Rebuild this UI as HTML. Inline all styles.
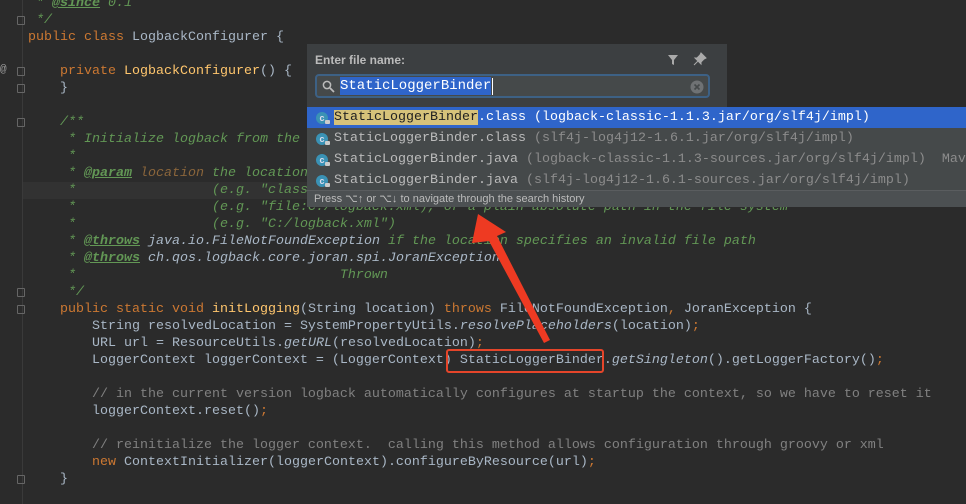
<!DOCTYPE html>
<html><head><meta charset="utf-8"><style>
body{margin:0;width:966px;height:504px;background:#2b2b2b;overflow:hidden;position:relative;font-family:"Liberation Mono",monospace;font-size:13.33px}
.l{position:absolute;left:28px;height:17px;line-height:17px;white-space:pre;color:#a9b7c6}
.k{color:#cc7832}.m{color:#ffc66d}.d{color:#629755;font-style:italic}.t{color:#629755;font-weight:bold;text-decoration:underline;font-style:italic}
.p{color:#8a653b;font-style:italic}.c{color:#808080}.i{font-style:italic}
.gut{position:absolute;left:22px;top:0;width:1px;height:504px;background:#3a3a3a}
.hl{position:absolute;left:23px;top:182px;width:943px;height:17px;background:#323232}
.fold{position:absolute;left:17px;width:8px;height:9px;border:1px solid #666;box-sizing:border-box;border-radius:1px}
#pop{position:absolute;left:307px;top:44px;width:420px;height:63px;background:#3c3f41}
.ttl{position:absolute;left:8px;top:9px;font:bold 12px "Liberation Sans",sans-serif;color:#bbbbbb}
.fld{position:absolute;left:8px;top:30px;width:395px;height:24px;box-sizing:border-box;border:2px solid #3d6185;border-radius:4px;background:#45494a}
.rows{position:absolute;left:307px;top:107px;width:659px;height:83px;background:#45494a}
.row{position:absolute;left:0;width:659px;height:21px;line-height:21px;white-space:pre;color:#bbbbbb;padding-left:27px;box-sizing:border-box}
.row .g{color:#8c8c8c}
.ic{position:absolute;left:9px;top:5px;width:12px;height:12px;border-radius:50%;background:#3a92b5;color:#dde;font:bold 9px "Liberation Sans";line-height:12px;text-align:center}
.ic:after{content:"";position:absolute;left:9px;top:8px;width:5px;height:4px;background:#ccc;border-radius:1px}
.hint{position:absolute;left:307px;top:190px;width:659px;height:17px;background:#4c5052;border-top:1px solid #5a5d5f;font:11px "Liberation Sans",sans-serif;color:#bbbbbb;line-height:17px;box-sizing:border-box;padding-left:7px}
</style></head><body>
<div class="gut"></div>
<div class="hl"></div>
<div class="fold" style="top:16px"></div>
<div class="fold" style="top:67px"></div>
<div class="fold" style="top:84px"></div>
<div class="fold" style="top:118px"></div>
<div class="fold" style="top:288px"></div>
<div class="fold" style="top:305px"></div>
<div class="fold" style="top:475px"></div>
<div style="position:absolute;left:0;top:64px;color:#999;font-size:11px">@</div>

<div class="l d" style="top:-5px"> * <span class="t">@since</span> 0.1</div>
<div class="l d" style="top:12px"> */</div>
<div class="l" style="top:29px"><span class="k">public class</span> LogbackConfigurer {</div>
<div class="l" style="top:63px">    <span class="k">private</span> <span class="m">LogbackConfigurer</span>() {</div>
<div class="l" style="top:80px">    }</div>
<div class="l d" style="top:114px">    /**</div>
<div class="l d" style="top:131px">     * Initialize logback from the given file.</div>
<div class="l d" style="top:148px">     *</div>
<div class="l d" style="top:165px">     * <span class="t">@param</span> <span class="p">location</span> the location of the config file: either a "classpath:" location</div>
<div class="l d" style="top:182px">     *                 (e.g. "classpath:logback.xml"), an absolute file URL</div>
<div class="l d" style="top:199px">     *                 (e.g. "file:C:/logback.xml), or a plain absolute path in the file system</div>
<div class="l d" style="top:216px">     *                 (e.g. "C:/logback.xml")</div>
<div class="l d" style="top:233px">     * <span class="t">@throws</span> <span style="color:#a9b7c6">java.io.FileNotFoundException</span> if the location specifies an invalid file path</div>
<div class="l d" style="top:250px">     * <span class="t">@throws</span> <span style="color:#a9b7c6">ch.qos.logback.core.joran.spi.JoranException</span></div>
<div class="l d" style="top:267px">     *                                 Thrown</div>
<div class="l d" style="top:284px">     */</div>
<div class="l" style="top:301px">    <span class="k">public static void</span> <span class="m">initLogging</span>(String location) <span class="k">throws</span> FileNotFoundException<span class="k">,</span> JoranException {</div>
<div class="l" style="top:318px">        String resolvedLocation = SystemPropertyUtils.<span class="i">resolvePlaceholders</span>(location)<span class="k">;</span></div>
<div class="l" style="top:335px">        URL url = ResourceUtils.<span class="i">getURL</span>(resolvedLocation)<span class="k">;</span></div>
<div class="l" style="top:352px">        LoggerContext loggerContext = (LoggerContext) StaticLoggerBinder.<span class="i">getSingleton</span>().getLoggerFactory()<span class="k">;</span></div>
<div class="l c" style="top:386px">        // in the current version logback automatically configures at startup the context, so we have to reset it</div>
<div class="l" style="top:403px">        loggerContext.reset()<span class="k">;</span></div>
<div class="l c" style="top:437px">        // reinitialize the logger context.  calling this method allows configuration through groovy or xml</div>
<div class="l" style="top:454px">        <span class="k">new</span> ContextInitializer(loggerContext).configureByResource(url)<span class="k">;</span></div>
<div class="l" style="top:471px">    }</div>

<div id="pop">
 <div class="ttl">Enter file name:</div>
 <svg style="position:absolute;left:360px;top:10px" width="12" height="12"><path d="M1 1h10L7 6v5L5 10V6z" fill="#aaa"/></svg>
 <svg style="position:absolute;left:386px;top:8px" width="14" height="14"><path d="M8 1l5 5-2 1-3 3v2L2 6h2l3-3z M5 9l-4 4" fill="#aaa" stroke="#aaa" stroke-width="1"/></svg>
 <div class="fld">
  <svg style="position:absolute;left:5px;top:4px" width="13" height="13"><circle cx="5" cy="5" r="3.6" fill="none" stroke="#bbb" stroke-width="1.5"/><path d="M8 8l4 4" stroke="#bbb" stroke-width="1.8"/></svg>
  <span style="position:absolute;left:23px;top:1px;line-height:18px;background:#2f65ca;color:#fff;font-size:14px">StaticLoggerBinder</span>
  <span style="position:absolute;left:175px;top:2px;width:1px;height:17px;background:#fff"></span>
  <svg style="position:absolute;left:373px;top:4px" width="14" height="14"><circle cx="7" cy="7" r="6.5" fill="#6f7274"/><path d="M4.5 4.5l5 5M9.5 4.5l-5 5" stroke="#45494a" stroke-width="1.6"/></svg>
 </div>
</div>
<div class="rows">
 <div class="row" style="top:0;background:#2f65ca;color:#fff"><span class="ic">c</span><span style="background:#d6c27a;color:#222">StaticLoggerBinder</span>.class (logback-classic-1.1.3.jar/org/slf4j/impl)</div>
 <div class="row" style="top:21px"><span class="ic">c</span>StaticLoggerBinder.class <span class="g">(slf4j-log4j12-1.6.1.jar/org/slf4j/impl)</span></div>
 <div class="row" style="top:42px"><span class="ic">c</span>StaticLoggerBinder.java <span class="g">(logback-classic-1.1.3-sources.jar/org/slf4j/impl)  Mav</span></div>
 <div class="row" style="top:63px;height:20px"><span class="ic">c</span>StaticLoggerBinder.java <span class="g">(slf4j-log4j12-1.6.1-sources.jar/org/slf4j/impl)</span></div>
</div>
<div class="hint">Press ⌥↑ or ⌥↓ to navigate through the search history</div>

<div style="position:absolute;left:446px;top:349px;width:158px;height:24px;border:2px solid #e5452a;border-radius:3px;box-sizing:border-box"></div>
<svg style="position:absolute;left:0;top:0" width="966" height="504"><polygon points="478,214 506,232 497,236 550,340 544,343 489,241 472,243" fill="#ee3a22"/></svg>
</body></html>
